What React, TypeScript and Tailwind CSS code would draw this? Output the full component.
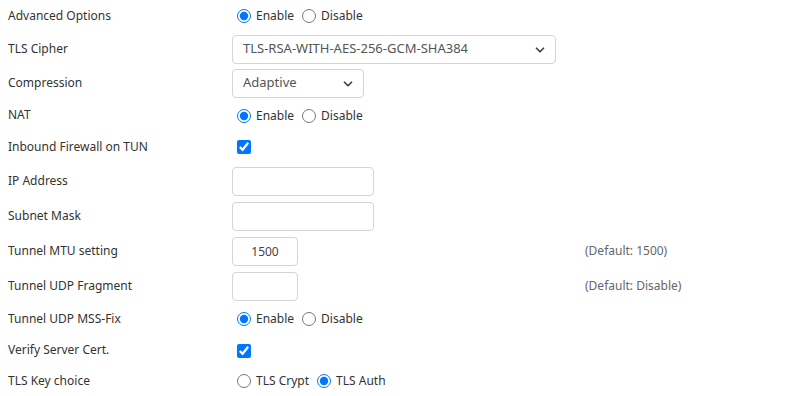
import { ChevronDown } from "lucide-react";

type Row =
	| { kind: "radio"; label: string; options: string[]; checked: number; h: string }
	| { kind: "check"; label: string; h: string }
	| { kind: "select"; label: string; value: string; width: string; h: string }
	| { kind: "input"; label: string; value: string; width: string; note?: string; h: string };

const rows: Row[] = [
	{ kind: "radio", label: "Advanced Options", options: ["Enable", "Disable"], checked: 0, h: "h-[32px]" },
	{ kind: "select", label: "TLS Cipher", value: "TLS-RSA-WITH-AES-256-GCM-SHA384", width: "w-[324px]", h: "h-[34px]" },
	{ kind: "select", label: "Compression", value: "Adaptive", width: "w-[132px]", h: "h-[34px]" },
	{ kind: "radio", label: "NAT", options: ["Enable", "Disable"], checked: 0, h: "h-[31px]" },
	{ kind: "check", label: "Inbound Firewall on TUN", h: "h-[32px]" },
	{ kind: "input", label: "IP Address", value: "", width: "w-[142px]", h: "h-[36px]" },
	{ kind: "input", label: "Subnet Mask", value: "", width: "w-[142px]", h: "h-[35px]" },
	{ kind: "input", label: "Tunnel MTU setting", value: "1500", width: "w-[66px]", note: "(Default: 1500)", h: "h-[35px]" },
	{ kind: "input", label: "Tunnel UDP Fragment", value: "", width: "w-[66px]", note: "(Default: Disable)", h: "h-[34px]" },
	{ kind: "radio", label: "Tunnel UDP MSS-Fix", options: ["Enable", "Disable"], checked: 0, h: "h-[32px]" },
	{ kind: "check", label: "Verify Server Cert.", h: "h-[31px]" },
	{ kind: "radio", label: "TLS Key choice", options: ["TLS Crypt", "TLS Auth"], checked: 1, h: "h-[30px]" },
];

function Control({ row, index }: { row: Row; index: number }) {
	if (row.kind === "radio") {
		return (
			<div className="flex items-center">
				{row.options.map((opt, i) => (
					<label key={opt} className={`flex items-center ${i === 0 ? "ml-[5px]" : "ml-[8px]"}`}>
						<input
							type="radio"
							name={`r${index}`}
							defaultChecked={i === row.checked}
							className="w-[14px] h-[14px] accent-[#0075ff]"
						/>
						<span className="ml-[5px] text-[12px] text-[#333]">{opt}</span>
					</label>
				))}
			</div>
		);
	}
	if (row.kind === "check") {
		return (
			<input type="checkbox" defaultChecked className="ml-[5px] w-[14px] h-[14px] accent-[#0075ff]" />
		);
	}
	if (row.kind === "select") {
		return (
			<div className={`relative ${row.width} h-[29px]`}>
				<select
					defaultValue={row.value}
					className="appearance-none w-full h-full rounded-[4px] border border-[#d4d4d4] bg-white pl-[10px] pr-7 text-[13px] text-[#555] outline-none"
				>
					<option>{row.value}</option>
				</select>
				<ChevronDown
					size={14}
					strokeWidth={3}
					className="absolute right-[9px] top-[8px] text-[#444] pointer-events-none"
				/>
			</div>
		);
	}
	return (
		<input
			type="text"
			defaultValue={row.value}
			className={`${row.width} h-[29px] rounded-[4px] border border-[#d4d4d4] bg-white text-center text-[12px] text-[#444] outline-none`}
		/>
	);
}

export default function App() {
	return (
		<div
			className="w-[800px] h-[396px] bg-white overflow-hidden"
			style={{ fontFamily: '"Noto Sans", "DejaVu Sans", sans-serif' }}
		>
			{rows.map((row, i) => (
				<div key={row.label} className={`flex items-center ${row.h}`}>
					<div className="w-[232px] pl-2 pb-[1px] text-[12px] text-[#333]">{row.label}</div>
					<div className="w-[353px] flex items-center">
						<Control row={row} index={i} />
					</div>
					{row.kind === "input" && row.note && (
						<div className="pb-[1px] text-[12px] text-[#666]">{row.note}</div>
					)}
				</div>
			))}
		</div>
	);
}
